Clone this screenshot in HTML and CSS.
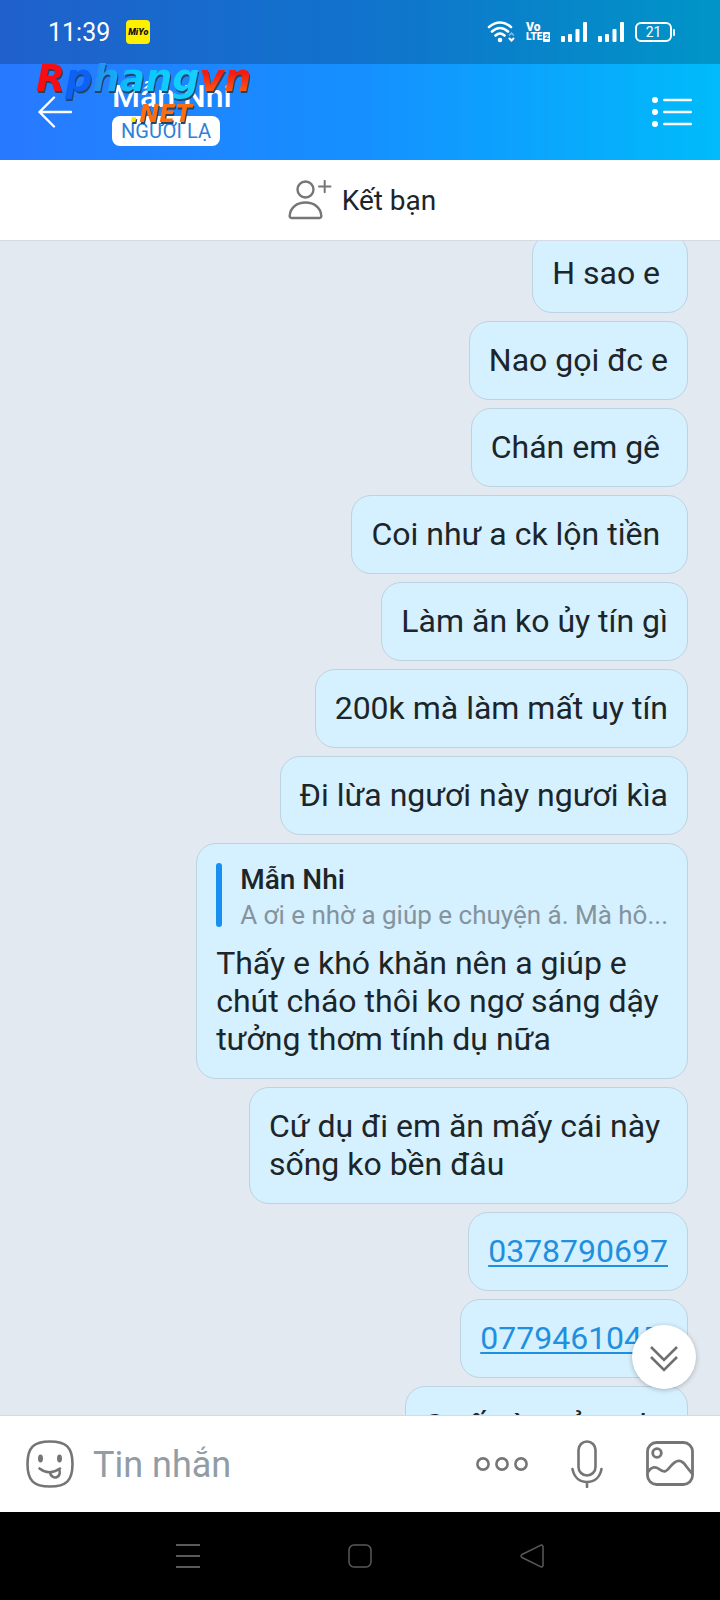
FILE: index.html
```html
<!DOCTYPE html>
<html lang="vi">
<head>
<meta charset="utf-8">
<meta name="viewport" content="width=device-width, initial-scale=1">
<title>Mẫn Nhi</title>
<link rel="stylesheet" href="styles.css">
</head>
<body>
<div class="top">
  <div class="status">
    <span class="time">11:39</span>
    <span class="app-badge">MiYo</span>
    <div class="status-icons">
      <svg width="28" height="22" viewBox="0 0 28 22" fill="none" stroke="#fff" stroke-width="2.6" stroke-linecap="round"><path d="M2 6Q13-3 24 6M5 10.500Q13 3.500 21 10.500M8.500 14.500Q13 10.500 17.500 14.500"/><circle cx="13" cy="19" r="1" /><path d="M22.500 14l2-2 2 2" stroke-width="1.500" opacity=".5"/><path d="M22.500 17.500l2 2 2-2" stroke-width="2"/></svg>
      <span class="volte"><span>Vo</span><span class="volte-row">LTE<b>2</b></span></span>
      <svg width="26" height="20" viewBox="0 0 26 20" fill="#fff"><rect y="14" width="4" height="6" rx="1"/><rect x="7" y="12" width="4" height="8" rx="1"/><rect x="14.500" y="7" width="4" height="13" rx="1"/><rect x="22" width="4" height="20" rx="1"/></svg>
      <svg width="26" height="20" viewBox="0 0 26 20" fill="#fff"><rect y="14" width="4" height="6" rx="1"/><rect x="7" y="12" width="4" height="8" rx="1"/><rect x="14.500" y="7" width="4" height="13" rx="1"/><rect x="22" width="4" height="20" rx="1"/></svg>
      <span class="battery">21</span>
    </div>
  </div>
  <header class="header">
    <button class="icon-btn" aria-label="Quay lại">
      <svg width="34" height="32" viewBox="0 0 34 32" fill="none" stroke="#fff" stroke-width="2.400" stroke-linecap="round" stroke-linejoin="round"><path d="M33 16H1.500M16 1.500L1.500 16L16 30.500"/></svg>
    </button>
    <div class="peer">
      <h1 class="peer-name">Mẫn Nhi</h1>
      <span class="peer-tag">NGƯỜI LẠ</span>
    </div>
    <button class="icon-btn" aria-label="Tùy chọn">
      <svg width="40" height="32" viewBox="0 0 40 32" fill="#fff"><circle cx="3" cy="4" r="3"/><circle cx="3" cy="16" r="3"/><circle cx="3" cy="28" r="3"/><rect x="11" y="2.700" width="29" height="2.600" rx="1.300"/><rect x="11" y="14.700" width="29" height="2.600" rx="1.300"/><rect x="11" y="26.700" width="29" height="2.600" rx="1.300"/></svg>
    </button>
  </header>
  <div class="logo">
    <div class="logo-main"><span class="red">R</span><span class="blue">p</span><span class="cyan">hang</span><span class="orange">vn</span></div>
    <div class="logo-net"><span class="yellow">.</span>NET</div>
  </div>
</div>
<button class="add-friend">
  <svg width="44" height="40" viewBox="0 0 44 40" fill="none" stroke="#767676" stroke-width="2.400" stroke-linecap="round" stroke-linejoin="round"><circle cx="17.500" cy="9.500" r="8"/><path d="M3.500 38H31.500Q33.500 38 33.300 35.500C32.500 27.500 26 22.500 17.500 22.500S2.500 27.500 1.700 35.500Q1.500 38 3.500 38Z"/><path d="M31 6.500H42.500M36.700 .800V12.300" stroke-width="2"/></svg>
  <span>Kết bạn</span>
</button>
<main class="chat">
  <div class="messages">
    <div class="bubble">H sao e&nbsp;</div>
    <div class="bubble">Nao gọi đc e</div>
    <div class="bubble">Chán em gê&nbsp;</div>
    <div class="bubble">Coi như a ck lộn tiền&nbsp;</div>
    <div class="bubble">Làm ăn ko ủy tín gì</div>
    <div class="bubble">200k mà làm mất uy tín</div>
    <div class="bubble">Đi lừa ngươi này ngươi kìa</div>
    <div class="bubble">
      <div class="quote">
        <div class="quote-name">Mẫn Nhi</div>
        <div class="quote-text">A ơi e nhờ a giúp e chuyện á. Mà hô...</div>
      </div>
      Thấy e khó khăn nên a giúp e<br>chút cháo thôi ko ngơ sáng dậy<br>tưởng thơm tính dụ nữa
    </div>
    <div class="bubble">Cứ dụ đi em ăn mấy cái này&nbsp;<br>sống ko bền đâu</div>
    <div class="bubble"><a href="tel:0378790697">0378790697</a></div>
    <div class="bubble"><a href="tel:0779461045">0779461045</a>&nbsp;</div>
    <div class="bubble">S vấn àn vả umhr</div>
  </div>
  <button class="scroll-down" aria-label="Xuống cuối">
    <svg width="28" height="26" viewBox="0 0 28 26" fill="none" stroke="#707070" stroke-width="2.600"><path d="M1 1L14 14L27 1M1 11L14 24L27 11"/></svg>
  </button>
</main>
<form class="composer">
  <button type="button" class="icon-btn" aria-label="Nhãn dán">
    <svg width="48" height="48" viewBox="0 0 48 48" fill="none" stroke="#757575" stroke-width="2.600" stroke-linecap="round"><path d="M24 1.500C40 1.500 46.500 7 46.500 24S40 46.500 24 46.500S1.500 41 1.500 24S8 1.500 24 1.500Z"/><ellipse cx="14.500" cy="18.500" rx="2.500" ry="4" fill="#757575" stroke="none"/><ellipse cx="33.500" cy="18.500" rx="2.500" ry="4" fill="#757575" stroke="none"/><path d="M13.500 28.500Q23 36 34 28.500"/><path d="M24 32.500C24.500 36 28 38.500 31 37C34 35.500 34.500 32 33 29.500"/></svg>
  </button>
  <input class="composer-input" type="text" placeholder="Tin nhắn" aria-label="Tin nhắn">
  <button type="button" class="icon-btn" aria-label="Thêm">
    <svg width="52" height="14" viewBox="0 0 52 14" fill="none" stroke="#757575" stroke-width="2.600"><circle cx="7" cy="7" r="5.600"/><circle cx="26" cy="7" r="5.600"/><circle cx="45" cy="7" r="5.600"/></svg>
  </button>
  <button type="button" class="icon-btn" aria-label="Ghi âm">
    <svg width="32" height="48" viewBox="0 0 32 48" fill="none" stroke="#757575" stroke-width="2.600" stroke-linecap="round"><rect x="7.500" y="1.500" width="17" height="34" rx="8.500"/><path d="M1.500 29C3 37 8.500 42 16 42S29 37 30.500 29M16 42V47"/></svg>
  </button>
  <button type="button" class="icon-btn" aria-label="Ảnh">
    <svg width="48" height="48" viewBox="0 0 48 48" fill="none" stroke="#757575" stroke-width="2.800"><rect x="1.500" y="2.500" width="45" height="42" rx="9"/><circle cx="11" cy="13" r="4.300"/><path d="M2 32C5 27 9 26 13 29C18 33 20 32 24 27C31 18 36 20 40 26L46 33.500"/></svg>
  </button>
</form>
<nav class="sysnav">
  <button class="icon-btn" aria-label="Ứng dụng gần đây"><svg width="24" height="26" viewBox="0 0 24 26" fill="none" stroke="#5a5a5a" stroke-width="2"><path d="M0 2H24M0 13H24M0 24H24"/></svg></button>
  <button class="icon-btn" aria-label="Trang chủ"><svg width="24" height="24" viewBox="0 0 24 24" fill="none" stroke="#5a5a5a" stroke-width="1.500"><rect x="1" y="1" width="22" height="22" rx="5"/></svg></button>
  <button class="icon-btn" aria-label="Trở lại"><svg width="24" height="24" viewBox="0 0 24 24" fill="none" stroke="#5a5a5a" stroke-width="1.500" stroke-linejoin="round"><path d="M2 10.500L20.500 1.300Q23 .500 23 3V21Q23 23.500 20.500 22.700L2 13.500Q0 12 2 10.500Z"/></svg></button>
</nav>
</body>
</html>
```
FILE: styles.css
```css
* { box-sizing: border-box; }
body {
  margin: 0;
  height: 100vh;
  display: flex;
  flex-direction: column;
  font-family: Roboto, "Liberation Sans", sans-serif;
  color: #1c2529;
  background: #e2e9f1;
}
button, input { font: inherit; color: inherit; }
button { border: 0; padding: 0; background: none; }
svg { display: block; flex: none; }
.icon-btn { display: flex; flex: none; }

.top {
  position: relative;
  flex: none;
  background: linear-gradient(90deg, #2879ff, #1590ff 50%, #00bbfa);
  color: #fff;
}
.status {
  height: 64px;
  display: flex;
  align-items: center;
  padding: 0 48px;
  background: rgba(0, 0, 0, 0.2);
}
.time { font-size: 25px; }
.app-badge {
  width: 24px;
  height: 24px;
  margin-left: 16px;
  border-radius: 4px;
  background: #fff000;
  color: #111;
  font-size: 9px;
  font-weight: 900;
  font-style: italic;
  line-height: 24px;
  text-align: center;
}
.status-icons { margin-left: auto; display: flex; align-items: center; gap: 11px; }
.volte {
  display: flex;
  flex-direction: column;
  font-size: 12px;
  font-weight: 900;
  line-height: 10px;
}
.volte-row { display: flex; font-size: 10px; }
.volte b {
  margin-left: 1px;
  padding: 0 1px;
  border-radius: 1px;
  background: #fff;
  color: #0b86c4;
  font-size: 8px;
}
.battery {
  position: relative;
  width: 37px;
  height: 20px;
  border: 2px solid #fff;
  border-radius: 6px;
  font-size: 14px;
  line-height: 16px;
  text-align: center;
}
.battery::after {
  content: "";
  position: absolute;
  right: -5px;
  top: 5px;
  width: 2px;
  height: 7px;
  border-radius: 1px;
  background: #fff;
}
.header {
  height: 96px;
  display: flex;
  align-items: center;
  padding: 0 28px 0 38px;
}
.peer { flex: 1; padding: 0 40px 2px; }
.peer-name { margin: 0; font-size: 32px; font-weight: 500; line-height: 40px; }
.peer-tag {
  display: block;
  width: fit-content;
  padding: 0 9px;
  border-radius: 8px;
  background: #fff;
  color: #2f80d6;
  font-size: 20px;
  line-height: 30px;
}
.logo {
  position: absolute;
  left: 36px;
  top: 56px;
  font-family: "DejaVu Sans", sans-serif;
  font-weight: 700;
  font-style: oblique;
  filter: drop-shadow(1px 2px 0 #24456b);
}
.logo-main { font-size: 38px; line-height: 44px; }
.logo-net {
  padding-left: 94px;
  font-size: 24px;
  line-height: 28px;
  color: #ff6d0a;
}
.red { color: #f80d12; }
.blue { color: #0d62f4; }
.cyan { color: transparent; background: linear-gradient(90deg, #2689ee, #08c8ff 40%, #17cfff); background-clip: text; }
.orange { color: transparent; background: linear-gradient(180deg, #f61b12 40%, #ff7a10); background-clip: text; }
.yellow { color: #ffe600; }

.add-friend {
  height: 81px;
  flex: none;
  display: flex;
  align-items: center;
  justify-content: center;
  gap: 10px;
  padding-left: 4px;
  border-bottom: 1px solid #d5dbe2;
  background: #fff;
  font-size: 28px;
}

.chat { position: relative; flex: 1; min-height: 0; overflow: hidden; }
.messages {
  display: flex;
  flex-direction: column;
  align-items: flex-end;
  gap: 8px;
  margin-top: -7px;
  padding: 0 32px;
}
.bubble {
  padding: 19px 19px 20px;
  border: 1px solid #bdd3e0;
  border-radius: 20px;
  background: #d5f0fe;
  font-size: 32px;
  line-height: 38px;
}
.bubble a { color: #1f8fe0; text-decoration-thickness: 2px; text-underline-offset: 3px; }
.quote {
  position: relative;
  margin-bottom: 12px;
  padding-left: 24px;
  font-size: 26px;
  line-height: 34px;
}
.quote::before {
  content: "";
  position: absolute;
  left: 0;
  top: 0;
  width: 6px;
  height: 64px;
  border-radius: 3px;
  background: #1890f2;
}
.quote-name { font-size: 28px; font-weight: 500; }
.quote-text { padding-top: 1px; color: #84939d; }
.scroll-down {
  position: absolute;
  right: 24px;
  bottom: 26px;
  width: 64px;
  height: 64px;
  display: flex;
  align-items: center;
  justify-content: center;
  padding-top: 4px;
  border-radius: 50%;
  background: #fff;
  box-shadow: 0 1px 5px rgba(0, 0, 0, 0.25);
}

.composer {
  height: 97px;
  flex: none;
  display: flex;
  align-items: center;
  gap: 43px;
  padding: 0 26px;
  border-top: 1px solid #d5dbe2;
  background: #fff;
}
.composer-input {
  flex: 1;
  min-width: 0;
  margin-left: -24px;
  padding: 2px 0 0;
  border: 0;
  outline: 0;
  background: none;
  font-size: 36px;
}
.composer-input::placeholder { color: #929ca5; opacity: 1; }
.sysnav {
  height: 88px;
  flex: none;
  display: flex;
  align-items: center;
  justify-content: center;
  gap: 148px;
  background: #000;
}
```
